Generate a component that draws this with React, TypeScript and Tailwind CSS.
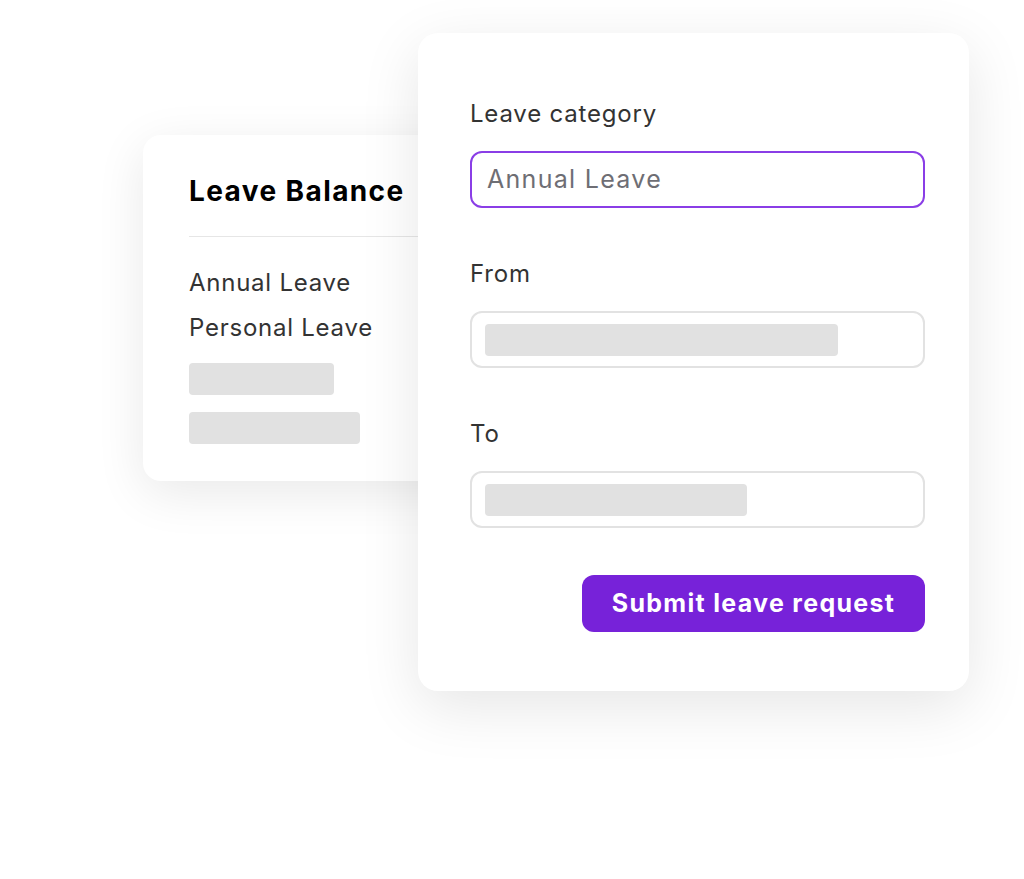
export default function App() {
  return (
    <div className="relative w-[1024px] h-[879px] bg-white overflow-hidden font-['Inter',sans-serif]">
      {/* Leave balance card (behind) */}
      <div className="absolute left-[143px] top-[135px] w-[330px] h-[346px] bg-white rounded-[18px] shadow-[0_12px_50px_rgba(0,0,0,0.09)] pt-[38px] pl-[46px]">
        <h2 className="text-[28px] leading-[36px] font-bold text-black tracking-[1.4px]">Leave Balance</h2>
        <div className="mt-[27px] h-px bg-[#e6e6e6]" />
        <p className="mt-[31px] text-[24px] leading-[30px] text-[#333] tracking-[0.75px]">Annual Leave</p>
        <p className="mt-[15px] text-[24px] leading-[30px] text-[#333] tracking-[0.75px]">Personal Leave</p>
        <div className="mt-[20px] w-[145px] h-[32px] rounded-[4px] bg-[#e1e1e1]" />
        <div className="mt-[17px] w-[171px] h-[32px] rounded-[4px] bg-[#e1e1e1]" />
      </div>

      {/* Leave request form card */}
      <div className="absolute left-[418px] top-[33px] w-[551px] h-[658px] bg-white rounded-[20px] shadow-[0_16px_60px_rgba(0,0,0,0.1)] pt-[66px] pl-[52px] pr-[44px]">
        <label className="block text-[24px] leading-[30px] text-[#333] tracking-[0.8px]">Leave category</label>
        <div className="mt-[22px] h-[57px] rounded-[12px] border-2 border-[#8a3ee6] flex items-center px-[15px]">
          <span className="text-[25px] text-[#6e6e74] tracking-[1.3px]">Annual Leave</span>
        </div>

        <label className="mt-[51px] block text-[24px] leading-[30px] text-[#333] tracking-[0.8px]">From</label>
        <div className="mt-[22px] h-[57px] rounded-[12px] border-2 border-[#e2e2e2] flex items-center px-[13px]">
          <div className="w-[353px] h-[32px] rounded-[4px] bg-[#e1e1e1]" />
        </div>

        <label className="mt-[51px] block text-[24px] leading-[30px] text-[#333] tracking-[0.8px]">To</label>
        <div className="mt-[22px] h-[57px] rounded-[12px] border-2 border-[#e2e2e2] flex items-center px-[13px]">
          <div className="w-[262px] h-[32px] rounded-[4px] bg-[#e1e1e1]" />
        </div>

        <div className="mt-[47px] flex justify-end">
          <button className="w-[343px] h-[57px] rounded-[12px] bg-[#7722d9] text-white text-[25px] font-bold tracking-[1.3px]">
            Submit leave request
          </button>
        </div>
      </div>
    </div>
  )
}
